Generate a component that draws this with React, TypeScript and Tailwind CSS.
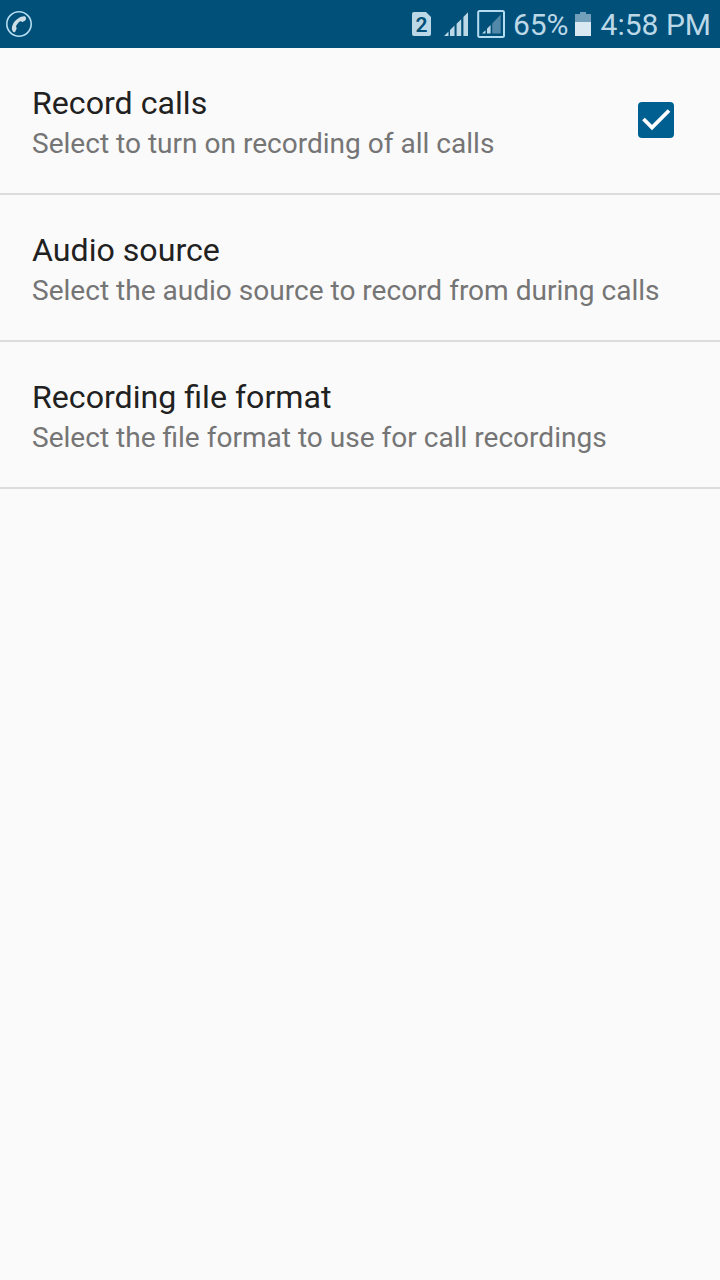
function CallIcon() {
  return (
    <svg className="ml-[5px]" width="28" height="28" viewBox="0 0 28 28">
      <circle cx="14" cy="14" r="12.2" fill="none" stroke="#b5ddf1" strokeWidth="1.6" />
      <path
        d="M7 19.5C6.3 15.5 9.3 10.7 13.5 8.2C16 6.7 19 5.8 20.4 6.7C21.5 7.6 21.2 9.8 20 10.7L17.4 11.9C16.4 12 16 11 15.2 11.3C13.2 12.4 11.5 14.8 11 16.5C10.9 17.3 12 17.8 11.7 18.6L10.2 21.7C9.2 23 7.4 21.8 7 19.5Z"
        fill="#cfdee6"
      />
    </svg>
  );
}

function SimIcon() {
  return (
    <svg width="19" height="24" viewBox="0 0 19 24">
      <path d="M2 0h12l5 5v17a2 2 0 0 1-2 2H2a2 2 0 0 1-2-2V2a2 2 0 0 1 2-2Z" fill="#bcd8e7" />
      <text x="9.5" y="19.7" textAnchor="middle" className="fill-[#00507a] font-['Roboto',sans-serif] text-[21px] font-semibold">2</text>
    </svg>
  );
}

function SignalIcon() {
  return (
    <svg className="ml-[13px]" width="24" height="24" viewBox="0 0 24 24" fill="#bcd8e7">
      <path d="M0 24L4.5 19.5V24ZM6 18L10.5 13.6V24H6ZM12.6 11.7L17.2 7.2V24H12.6ZM19.4 5L24 0.2V24H19.4Z" />
    </svg>
  );
}

function BoxedSignalIcon() {
  return (
    <svg className="ml-[9px]" width="28" height="28" viewBox="0 0 28 28">
      <rect x="1.2" y="1" width="25.8" height="26" rx="1.5" fill="none" stroke="#b5ddf1" strokeWidth="2" />
      <path d="M5 23.5L8.5 20.2V23.5ZM10 18.7L13.6 14.9V23.5H10Z" fill="#bcd8e7" />
      <path d="M15.2 13.4L23.7 4.5V23.5H15.2Z" fill="#5288a8" />
    </svg>
  );
}

function BatteryIcon() {
  return (
    <svg className="mr-2.5 ml-1.5" width="16" height="24" viewBox="0 0 16 24">
      <path d="M5 0h6v2h5v8H0V2h5Z" fill="#72a0bb" />
      <path d="M0 10h16v14H0Z" fill="#d9e8f1" />
    </svg>
  );
}

function Checkbox() {
  return (
    <svg className="-mt-0.5" width="36" height="36" viewBox="0 0 36 36">
      <rect width="36" height="36" rx="4" fill="#005f91" />
      <path d="M5.5 17l8.5 8.5L31 8.5" fill="none" stroke="#fff" strokeWidth="3.8" />
    </svg>
  );
}

const rows = [
  { title: "Record calls", sub: "Select to turn on recording of all calls", check: true },
  { title: "Audio source", sub: "Select the audio source to record from during calls" },
  { title: "Recording file format", sub: "Select the file format to use for call recordings" },
];

export default function App() {
  return (
    <div className="h-[1280px] w-[720px] overflow-hidden bg-[#fafafa] font-['Roboto',sans-serif]">
      <header className="flex h-12 items-center bg-[#00507a] text-[#bcd8e7]">
        <CallIcon />
        <div className="ml-auto flex items-center pr-[9px]">
          <SimIcon />
          <SignalIcon />
          <BoxedSignalIcon />
          <span className="ml-2 pt-0.5 text-[30px] leading-none">65%</span>
          <BatteryIcon />
          <span className="pt-0.5 text-[30px] leading-none">4:58 PM</span>
        </div>
      </header>
      <main>
        {rows.map((r) => (
          <section key={r.title} className="flex h-[147px] items-center justify-between border-b-2 border-[#dcdcdc] pr-[46px] pl-8">
            <div className="pt-1">
              <h2 className="text-[32.15px] leading-[43px] text-[#212121]">{r.title}</h2>
              <p className="text-[28.06px] leading-[38px] text-[#757575]">{r.sub}</p>
            </div>
            {r.check && <Checkbox />}
          </section>
        ))}
      </main>
    </div>
  );
}
